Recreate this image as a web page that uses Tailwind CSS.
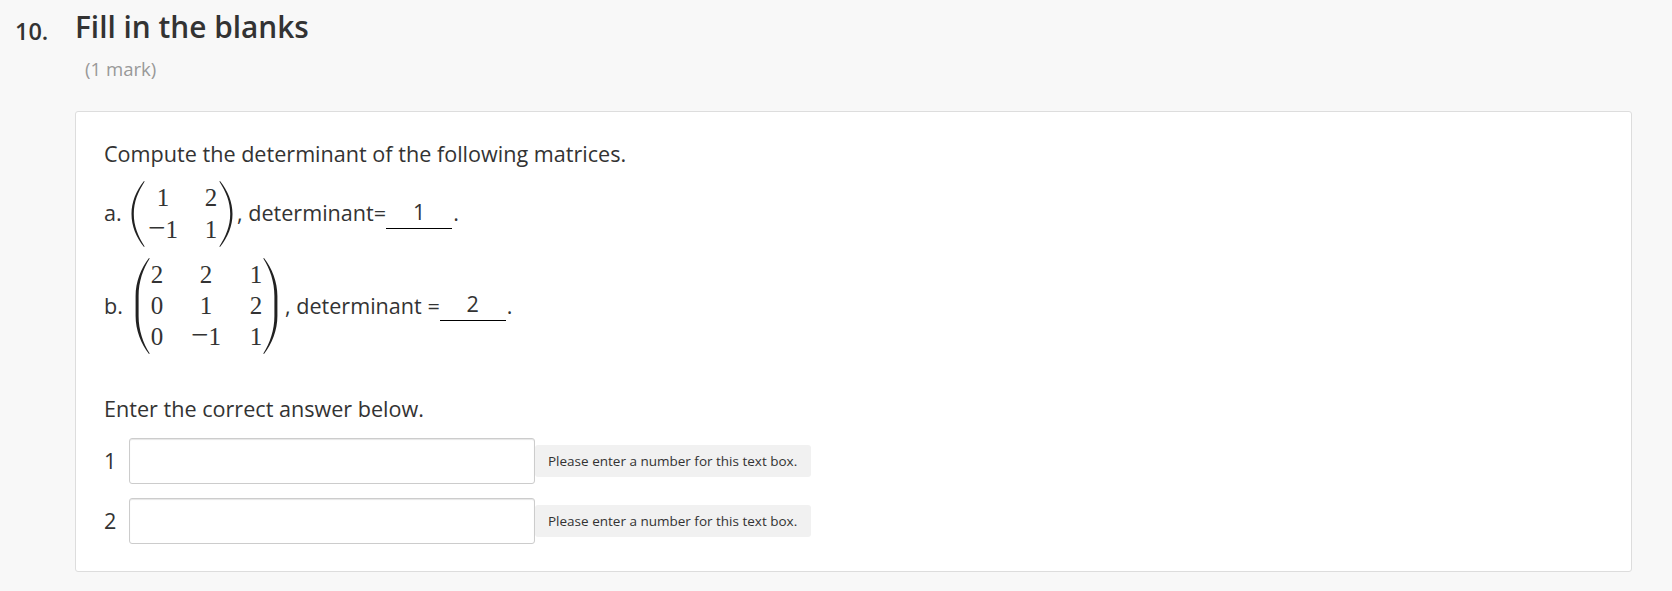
<!DOCTYPE html>
<html lang="en">
<head>
    <meta charset="UTF-8">
    <title>Fill in the blanks</title>
    <script src="https://cdn.jsdelivr.net/npm/@tailwindcss/browser@4"></script>
</head>
<body class="bg-[#f8f8f8] text-[#333] font-['Open_Sans',sans-serif] h-[591px] overflow-hidden">
<div class="flex pl-[15px] pr-[40px]">
    <div class="w-[60px] pt-[15px] text-[23.5px] leading-[32px] font-semibold">10.</div>
    <div class="flex-1">
        <h1 class="text-[29.8px] leading-[40px] font-semibold pt-[7px]">Fill in the blanks</h1>
        <div class="text-[18.6px] leading-[26px] text-[#999] pl-[10px] mt-[9px]">(1 mark)</div>

        <div class="mt-[29px] h-[461px] bg-white border border-[#ddd] rounded-[3px] pl-[28px] text-[21.6px]">
            <p class="pt-[27px] leading-[30px]">Compute the determinant of the following matrices.</p>

            <!-- a. -->
            <div class="flex items-center h-[66px] mt-[11px]">
                <span class="w-[27px]">a.</span>
                <svg class="w-[14px] h-[66px] mt-[2px]" viewBox="0 0 14 66"><path fill="#222" d="M13 0C5 10 .5 21 .5 33S5 56 13 66l.6-.6C7 55 2.8 45 2.8 33S7 11 13.6 .6z"/></svg>
                <div class="grid grid-cols-[32px_20px] gap-x-[22px] gap-y-[4px] mt-[2px] ml-[2px] -mr-[4px] w-[76px] text-center font-['Liberation_Serif',serif] text-[25px] leading-[28px]">
                    <span>1</span><span>2</span>
                    <span><span class="text-[31px] leading-[0] font-light">−</span>1</span><span>1</span>
                </div>
                <svg class="w-[14px] h-[66px] mt-[2px] -scale-x-100" viewBox="0 0 14 66"><path fill="#222" d="M13 0C5 10 .5 21 .5 33S5 56 13 66l.6-.6C7 55 2.8 45 2.8 33S7 11 13.6 .6z"/></svg>
                <span class="ml-[4px]">, determinant=</span>
                <span class="w-[66px] h-[30px] mt-[1px] border-b border-black text-center leading-[26px]">1</span>
                <span class="ml-[1px]">.</span>
            </div>

            <!-- b. -->
            <div class="flex items-center h-[96px] mt-[11px]">
                <span class="w-[31px] pt-[2px]">b.</span>
                <svg class="w-[15px] h-[96px] mt-[2px]" viewBox="0 0 15 96"><path fill="#222" d="M14 0C6 10 .6 24 .6 38V58C.6 72 6 86 14 96l.7-.6C8 85 3.6 72 3.6 58V38C3.6 24 8 11 14.7 .6z"/></svg>
                <div class="grid grid-cols-[24px_32px_26px] gap-x-[21px] gap-y-[3px] mt-[2px] w-[124px] -ml-[5px] -mr-[6px] text-center font-['Liberation_Serif',serif] text-[25px] leading-[28px]">
                    <span>2</span><span>2</span><span>1</span>
                    <span>0</span><span>1</span><span>2</span>
                    <span>0</span><span><span class="text-[31px] leading-[0] font-light">−</span>1</span><span>1</span>
                </div>
                <svg class="w-[15px] h-[96px] mt-[2px] -scale-x-100" viewBox="0 0 15 96"><path fill="#222" d="M14 0C6 10 .6 24 .6 38V58C.6 72 6 86 14 96l.7-.6C8 85 3.6 72 3.6 58V38C3.6 24 8 11 14.7 .6z"/></svg>
                <span class="ml-[7px] pt-[2px]">, determinant =</span>
                <span class="w-[66px] h-[30px] mt-[1px] border-b border-black text-center leading-[26px]">2</span>
                <span class="ml-[1px] pt-[2px]">.</span>
            </div>

            <p class="mt-[41px] leading-[30px]">Enter the correct answer below.</p>

            <div class="flex flex-col gap-[14px] mt-[14px]">
                <div class="flex items-center">
                    <span class="w-[25px]">1</span>
                    <input type="text" class="w-[406px] h-[46px] bg-white border border-[#ccc] rounded-[3px] shadow-[inset_0_1px_1px_rgba(0,0,0,0.1)]">
                    <span class="flex items-center h-[32px] px-[13px] bg-[#f1f1f1] rounded-[3px] text-[13.5px] w-[276px] whitespace-nowrap">Please enter a number for this text box.</span>
                </div>
                <div class="flex items-center">
                    <span class="w-[25px]">2</span>
                    <input type="text" class="w-[406px] h-[46px] bg-white border border-[#ccc] rounded-[3px] shadow-[inset_0_1px_1px_rgba(0,0,0,0.1)]">
                    <span class="flex items-center h-[32px] px-[13px] bg-[#f1f1f1] rounded-[3px] text-[13.5px] w-[276px] whitespace-nowrap">Please enter a number for this text box.</span>
                </div>
            </div>
        </div>
    </div>
</div>
</body>
</html>
